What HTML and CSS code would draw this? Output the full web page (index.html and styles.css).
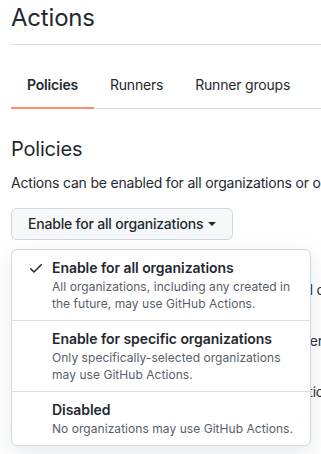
FILE: index.html
```html
<!DOCTYPE html>
<html lang="en">
<head>
    <meta charset="UTF-8">
    <meta name="viewport" content="width=device-width, initial-scale=1.0">
    <title>Actions - Policies</title>
    <link rel="stylesheet" href="styles.css">
</head>
<body>
    <div class="page">
        <div class="page-header">
            <h1>Actions</h1>
        </div>

        <nav class="tabs">
            <a class="tab selected" href="#">Policies</a>
            <a class="tab" href="#">Runners</a>
            <a class="tab" href="#">Runner groups</a>
        </nav>

        <h2 class="section-title">Policies</h2>
        <p class="section-desc">Actions can be enabled for all organizations or only for specific organizations.</p>

        <div class="dropdown">
            <button class="btn">Enable for all organizations <span class="caret"></span></button>

            <div class="menu">
                <div class="menu-item">
                    <svg class="check" width="16" height="16" viewBox="0 0 16 16"><path d="M13.78 4.22a.75.75 0 0 1 0 1.06l-7.25 7.25a.75.75 0 0 1-1.06 0L2.22 9.28a.751.751 0 0 1 .018-1.042.751.751 0 0 1 1.042-.018L6 10.94l6.72-6.72a.75.75 0 0 1 1.06 0Z"></path></svg>
                    <div class="item-text">
                        <div class="item-title">Enable for all organizations</div>
                        <div class="item-desc">All organizations, including any created in the future, may use GitHub Actions.</div>
                    </div>
                </div>
                <div class="menu-item">
                    <span class="check-space"></span>
                    <div class="item-text">
                        <div class="item-title">Enable for specific organizations</div>
                        <div class="item-desc">Only specifically-selected organizations may use GitHub Actions.</div>
                    </div>
                </div>
                <div class="menu-item">
                    <span class="check-space"></span>
                    <div class="item-text">
                        <div class="item-title">Disabled</div>
                        <div class="item-desc">No organizations may use GitHub Actions.</div>
                    </div>
                </div>
            </div>
        </div>

        <div class="options">
            <div class="option">Allow all actions and reusable workflows, listed or not</div>
            <div class="option">Allow enterprise actions and reusable flows over all organizations</div>
            <div class="option">Allow enterprise, and select non-enterprise actions and reusable workflows</div>
        </div>
    </div>
</body>
</html>
```

FILE: styles.css
```css
* {
    margin: 0;
    padding: 0;
    box-sizing: border-box;
}

html,
body {
    height: 100%;
    overflow: hidden;
}

body {
    font-family: Inter, "Noto Sans", sans-serif;
    background: #ffffff;
    color: #24292f;
    letter-spacing: -0.2px;
}

.page {
    width: 700px;
    padding-left: 11px;
}

.page-header {
    border-bottom: 1px solid #d8dee4;
    padding-bottom: 8px;
}

.page-header h1 {
    font-size: 24px;
    font-weight: 400;
    line-height: 36px;
}

.tabs {
    display: flex;
    margin-top: 15px;
    height: 49px;
    border-bottom: 1px solid #d8dee4;
}

.tab {
    position: relative;
    display: flex;
    align-items: center;
    padding: 0 16px;
    font-size: 14px;
    color: #24292f;
    text-decoration: none;
}

.tab.selected {
    font-weight: 600;
}

.tab.selected::after {
    content: "";
    position: absolute;
    left: 0;
    right: 0;
    bottom: -1px;
    height: 2px;
    background: #fd8c73;
}

.section-title {
    font-size: 20px;
    font-weight: 400;
    line-height: 30px;
    margin-top: 25px;
}

.section-desc {
    font-size: 14px;
    line-height: 21px;
    margin-top: 8px;
    white-space: nowrap;
}

.dropdown {
    position: relative;
    margin-top: 15px;
}

.btn {
    font-family: inherit;
    letter-spacing: inherit;
    font-size: 14px;
    font-weight: 500;
    line-height: 20px;
    color: #24292f;
    background: #f6f8fa;
    border: 1px solid #d0d7de;
    border-radius: 6px;
    padding: 5px 16px;
    height: 32px;
    display: inline-flex;
    align-items: center;
    gap: 4px;
}

.caret {
    display: inline-block;
    width: 0;
    height: 0;
    border-top: 4px solid #24292f;
    border-left: 4px solid transparent;
    border-right: 4px solid transparent;
    margin-left: 1px;
}

.menu {
    position: absolute;
    top: 41px;
    left: 0;
    width: 300px;
    background: #ffffff;
    border: 1px solid #d0d7de;
    border-radius: 6px;
    box-shadow: 0 8px 24px rgba(140, 149, 159, 0.2);
    z-index: 10;
}

.menu-item {
    display: flex;
    gap: 8px;
    padding: 8px 16px;
    border-bottom: 1px solid #d8dee4;
}

.menu-item:last-child {
    border-bottom: none;
}

.check {
    flex-shrink: 0;
    margin-top: 2px;
    fill: #24292f;
}

.check-space {
    width: 16px;
    flex-shrink: 0;
}

.item-title {
    font-size: 14px;
    font-weight: 600;
    line-height: 20px;
    letter-spacing: -0.05px;
}

.item-desc {
    font-size: 12px;
    line-height: 17px;
    color: #57606a;
    letter-spacing: 0.05px;
}

.options {
    margin-top: 24px;
}

.option {
    font-size: 14px;
    line-height: 21px;
    padding: 15px 0;
    white-space: nowrap;
}
```
